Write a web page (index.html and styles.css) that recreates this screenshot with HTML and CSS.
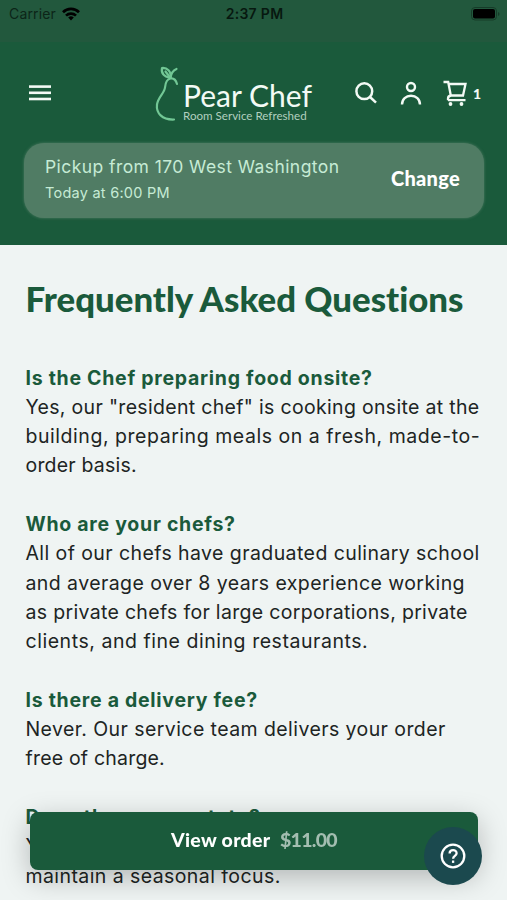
FILE: index.html
```html
<!DOCTYPE html>
<html lang="en">
<head>
    <meta charset="UTF-8">
    <meta name="viewport" content="width=device-width, initial-scale=1.0">
    <title>Pear Chef - FAQ</title>
    <link rel="stylesheet" href="styles.css">
</head>
<body>
    <div class="status-bar">
        <div class="carrier">
            <span class="carrier-name">Carrier</span>
            <svg width="18" height="14" viewBox="0 0 18 14" fill="none" stroke="#000" stroke-width="2.7">
                <path d="M1 5.2a11.4 11.4 0 0 1 16 0"/>
                <path d="M4 8.6a7.2 7.2 0 0 1 10 0"/>
                <path d="M9 13.6l-2.8-3a4 4 0 0 1 5.6 0z" fill="#000" stroke="none"/>
            </svg>
        </div>
        <div class="clock">2:37 PM</div>
        <svg class="battery" width="29" height="14" viewBox="0 0 29 14">
            <rect x="0.5" y="0.5" width="25" height="12.5" rx="3.5" fill="none" stroke="#163c29"/>
            <rect x="2" y="2" width="22" height="9.5" rx="2" fill="#000"/>
            <path d="M27 5v4q1.5-.6 1.5-2t-1.5-2z" fill="#163c29"/>
        </svg>
    </div>

    <header>
        <div class="top-row">
            <button class="menu-btn" aria-label="Menu">
                <svg width="22" height="16" viewBox="0 0 22 16" fill="#f3faf5">
                    <rect width="22" height="2.6" y="0.3"/>
                    <rect width="22" height="2.6" y="6.5"/>
                    <rect width="22" height="2.6" y="12.7"/>
                </svg>
            </button>
            <a href="#" class="logo">
                <svg width="26" height="56" viewBox="0 0 26 56" fill="none" stroke="#72c795" stroke-width="2.2" stroke-linecap="round" stroke-linejoin="round">
                    <path d="M19 53.5C7 54 1 47 2 38.5C3 31 9.5 27 10 21.5C10.5 16 12 13 15.5 12.5C19 12 21 14.5 22 18"/>
                    <path d="M15.5 12C8.5 10.5 6 7 7 2C12 1.5 16.5 5 15.5 12z"/>
                    <path d="M10.5 5.5L15.5 12C16 7.5 18 4.5 21.5 3"/>
                </svg>
                <div class="logo-text">
                    <span class="logo-name">Pear Chef</span>
                    <span class="logo-tag">Room Service Refreshed</span>
                </div>
            </a>
            <div class="actions">
                <svg width="22" height="22" viewBox="0 0 22 22" fill="none" stroke="#f3faf5" stroke-width="2.5">
                    <circle cx="9.3" cy="9.2" r="7.9"/>
                    <path d="M15 15l6 5.6"/>
                </svg>
                <svg width="22" height="24" viewBox="0 0 22 24" fill="none" stroke="#f3faf5" stroke-width="2.4">
                    <circle cx="11" cy="6" r="4"/>
                    <path d="M2 23.5c0-5.5 4-8.8 9-8.8s9 3.3 9 8.8"/>
                </svg>
                <svg width="24" height="26" viewBox="0 0 24 26" fill="none" stroke="#f3faf5" stroke-width="2.3">
                    <path d="M0.5 2H5.2L7.8 15.5H20L22.5 4H5.7"/>
                    <path d="M5 20.2H22.5M5 20.2V18.5Q5 16 8 15.5"/>
                    <circle cx="7.5" cy="24" r="1.9" fill="#f3faf5" stroke="none"/>
                    <circle cx="18.5" cy="24" r="1.9" fill="#f3faf5" stroke="none"/>
                </svg>
                <span class="cart-count">1</span>
            </div>
        </div>

        <div class="pickup">
            <div>
                <p class="pickup-place">Pickup from 170 West Washington</p>
                <p class="pickup-time">Today at 6:00 PM</p>
            </div>
            <a href="#" class="change">Change</a>
        </div>
    </header>

    <main>
        <h1>Frequently Asked Questions</h1>

        <section class="faq">
            <h2>Is the Chef preparing food onsite?</h2>
            <p><span class="snug">Yes, our "resident chef" is cooking onsite at the</span><br>
               <span class="loose">building, preparing meals on a fresh, made-to-</span><br>
               <span class="tight">order basis.</span></p>
        </section>

        <section class="faq">
            <h2>Who are your chefs?</h2>
            <p>All of our chefs have graduated culinary school<br>
               and average over 8 years experience working<br>
               <span class="snug">as private chefs for large corporations, private</span><br>
               <span class="loose">clients, and fine dining restaurants.</span></p>
        </section>

        <section class="faq">
            <h2>Is there a delivery fee?</h2>
            <p>Never. Our service team delivers your order<br>
               <span class="tight">free of charge.</span></p>
        </section>

        <section class="faq">
            <h2 class="wide">Does the menu rotate?</h2>
            <p>Yes, our chefs rotate the menu often to<br>
               maintain a seasonal focus.</p>
        </section>
    </main>

    <button class="view-order">View order <span class="total">$11.00</span></button>

    <button class="help" aria-label="Help">
        <svg width="26" height="26" viewBox="0 0 26 26" fill="none" stroke="#fff" stroke-width="2.3">
            <circle cx="13" cy="13" r="11.3"/>
            <path d="M9.6 10.5c0-4.6 7-4.4 7-.3 0 2.7-3.5 2.8-3.5 5.6"/>
            <path d="M13.1 17.5v2.4"/>
        </svg>
    </button>
</body>
</html>
```

FILE: styles.css
```css
:root {
    --green: #1a5a3b;
    --status-green: #22583d;
    --background: #eff4f3;
    --text: #202423;
    --light: #f3faf5;
}

* {
    margin: 0;
    padding: 0;
    box-sizing: border-box;
}

body {
    height: 900px;
    overflow: hidden;
    font-family: 'Inter', sans-serif;
    background-color: var(--background);
    color: var(--text);
}

button {
    border: none;
    background: none;
    cursor: pointer;
}

a {
    text-decoration: none;
}

svg {
    display: block;
}

.status-bar {
    display: grid;
    grid-template-columns: 1fr auto 1fr;
    align-items: center;
    height: 42px;
    padding: 0 7px 15px 9px;
    background-color: var(--status-green);
    color: #071810;
    font-size: 14px;
}

.carrier {
    display: flex;
    align-items: center;
    gap: 6px;
}

.carrier-name {
    color: #0c2518;
    letter-spacing: 0.15px;
}

.clock {
    font-weight: 600;
    letter-spacing: 0.3px;
}

.battery {
    justify-self: end;
}

header {
    height: 203px;
    padding: 23px 23px 0;
    background-color: var(--green);
}

.top-row {
    display: flex;
    height: 78px;
}

.menu-btn {
    align-self: flex-start;
    margin: 20px 0 0 6px;
}

.logo {
    display: flex;
    margin: 1px 0 0 104px;
}

.logo-text {
    display: flex;
    flex-direction: column;
    width: 131px;
    margin-left: 2px;
    padding-top: 11px;
    white-space: nowrap;
}

.logo-name {
    font-family: 'Lato', sans-serif;
    font-size: 30px;
    line-height: 36px;
    color: var(--light);
}

.logo-tag {
    font-family: 'Lato', sans-serif;
    font-size: 11.6px;
    line-height: 10px;
    margin-top: -2px;
    color: #b2cfbf;
}

.actions {
    display: flex;
    align-items: center;
    height: 56px;
    margin-left: 41px;
}

.actions svg + svg {
    margin-left: 23px;
}

.actions svg:nth-child(3) {
    margin-left: 21px;
}

.cart-count {
    margin-left: 6px;
    font-family: 'Lato', sans-serif;
    font-weight: 900;
    font-size: 14px;
    color: var(--light);
}

.pickup {
    display: flex;
    justify-content: space-between;
    align-items: center;
    height: 75px;
    margin: 0 0 0 1px;
    padding: 0 24px 2px 21px;
    border-radius: 20px;
    background-color: #507c64;
    box-shadow: 0 0 3px #507c64;
    color: #c6ebd5;
}

.pickup-place {
    font-size: 17.5px;
    line-height: 27px;
    letter-spacing: 0.43px;
}

.pickup-time {
    font-size: 14.5px;
    line-height: 26px;
    letter-spacing: 0.25px;
}

.change {
    padding-bottom: 4px;
    font-family: 'Lato', sans-serif;
    font-weight: 900;
    font-size: 20px;
    letter-spacing: 0.3px;
    color: #fff;
}

main {
    padding: 35px 25.5px 0;
}

h1 {
    font-family: 'Lato', sans-serif;
    font-weight: 900;
    font-size: 34.8px;
    font-variant-ligatures: none;
    line-height: 38px;
    margin-bottom: 45.5px;
    white-space: nowrap;
    color: var(--green);
}

.faq {
    margin-bottom: 29.3px;
    font-size: 19.5px;
    line-height: 29.3px;
    letter-spacing: 0.42px;
    white-space: nowrap;
}

.faq h2 {
    font-size: 19.5px;
    line-height: 29.3px;
    font-weight: 700;
    letter-spacing: 0.72px;
    color: var(--green);
}

.faq .wide {
    letter-spacing: 1px;
}

.tight {
    letter-spacing: 0.2px;
}

.snug {
    letter-spacing: 0.32px;
}

.loose {
    letter-spacing: 0.54px;
}

/* Floating order bar */
.view-order {
    position: fixed;
    left: 30px;
    top: 812px;
    width: 448px;
    height: 58px;
    padding-bottom: 4px;
    border-radius: 8px;
    background-color: var(--green);
    box-shadow: 0 8px 28px rgba(0, 0, 0, 0.25);
    font-family: 'Lato', sans-serif;
    font-weight: 900;
    font-size: 19.5px;
    letter-spacing: 0.3px;
    color: #fff;
}

.total {
    margin-left: 5px;
    letter-spacing: -0.7px;
    color: #a3bdb0;
}

.help {
    position: fixed;
    left: 424px;
    top: 827px;
    width: 58px;
    height: 58px;
    padding: 16px;
    border-radius: 50%;
    background-color: #1b494e;
}
```
